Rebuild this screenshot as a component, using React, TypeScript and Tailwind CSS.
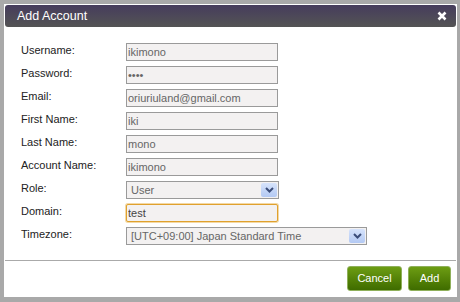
import React from 'react';

const fields = [
  { label: 'Username:', value: 'ikimono' },
  { label: 'Password:', value: 'ikim', type: 'password' },
  { label: 'Email:', value: 'oriuriuland@gmail.com' },
  { label: 'First Name:', value: 'iki' },
  { label: 'Last Name:', value: 'mono' },
  { label: 'Account Name:', value: 'ikimono' },
];

function Chevron() {
  return (
    <div className="absolute right-[1px] top-[1px] bottom-[1px] w-[16px] flex items-center justify-center rounded-[2px] bg-gradient-to-b from-[#d6e3fb] to-[#b3c9f3]">
      <svg width="9" height="6" viewBox="0 0 9 6">
        <path d="M1 1 L4.5 4.5 L8 1" fill="none" stroke="#3b4d7a" strokeWidth="2" />
      </svg>
    </div>
  );
}

function Select({ value, width }: { value: string; width: string }) {
  return (
    <div className={`relative h-[18px] ${width} border border-[#9a9a9a] bg-[#f3f1f1] text-[#666] pl-[4px] leading-[16px]`}>
      {value}
      <Chevron />
    </div>
  );
}

export default function App() {
  const row = 'flex items-start h-[18px]';
  const label = 'w-[105px] text-[#222] leading-[13px] pt-[1px]';
  const input =
    'h-[18px] w-[152px] border border-[#9a9a9a] bg-[#f3f1f1] text-[#666] px-[1px] text-[11px] outline-none';

  return (
    <div
      className="w-[460px] h-[302px] bg-[#a9a9a9] pt-[4px] pl-[4px] text-[11px]"
      style={{ fontFamily: '"Liberation Sans", Arial, sans-serif' }}
    >
      <div className="w-[453px] h-[293px] bg-white p-[1px] flex flex-col">
        <div className="h-[22px] rounded-[3px] bg-gradient-to-b from-[#463c5c] to-[#545454] flex items-center justify-between pl-[12px] pr-[9px]">
          <span className="text-white text-[12.5px]">Add Account</span>
          <svg width="10" height="10" viewBox="0 0 10 10">
            <path d="M1.5 1.5 L8.5 8.5 M8.5 1.5 L1.5 8.5" stroke="#fff" strokeWidth="2.6" />
          </svg>
        </div>

        <div className="flex flex-col gap-[5px] pt-[16px] pl-[16px]">
          {fields.map((f) => (
            <div key={f.label} className={row}>
              <span className={label}>{f.label}</span>
              <input readOnly type={f.type ?? 'text'} value={f.value} className={input} />
            </div>
          ))}
          <div className={row}>
            <span className={label}>Role:</span>
            <Select value="User" width="w-[153px]" />
          </div>
          <div className={row}>
            <span className={label}>Domain:</span>
            <input
              readOnly
              value="test"
              className="h-[18px] w-[152px] rounded-[2px] border border-[#e0a12e] bg-[#f3f1f1] text-[#444] px-[1px] text-[11px] outline-none shadow-[0_0_0_1px_#f3d9a6]"
            />
          </div>
          <div className={row}>
            <span className={label}>Timezone:</span>
            <Select value="[UTC+09:00] Japan Standard Time" width="w-[241px]" />
          </div>
        </div>

        <div className="mt-[15px] h-[1px] bg-[#aaaaaa]" />

        <div className="flex justify-end gap-[6px] pt-[5px] pr-[5px]">
          <button className="h-[25px] w-[55px] rounded-[3px] border border-[#8fb05a] bg-gradient-to-b from-[#6d9d13] to-[#3f6c00] text-white text-[11px]">
            Cancel
          </button>
          <button className="h-[25px] w-[43px] rounded-[3px] border border-[#8fb05a] bg-gradient-to-b from-[#6d9d13] to-[#3f6c00] text-white text-[11px]">
            Add
          </button>
        </div>
      </div>
    </div>
  );
}
